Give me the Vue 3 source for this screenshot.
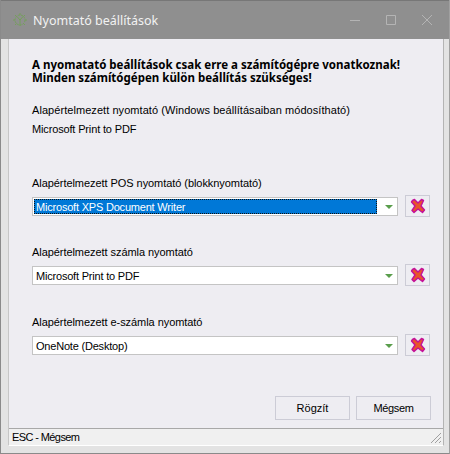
<script setup>
const printers = [
  { label: "Alapértelmezett POS nyomtató (blokknyomtató)", value: "Microsoft XPS Document Writer", selected: true },
  { label: "Alapértelmezett számla nyomtató", value: "Microsoft Print to PDF", selected: false },
  { label: "Alapértelmezett e-számla nyomtató", value: "OneNote (Desktop)", selected: false },
];
</script>

<template>
  <div class="window">
    <div class="titlebar">
      <svg class="app-icon" width="16" height="16" viewBox="0 0 16 16">
        <g fill="none" stroke="#74a05a" stroke-width="1">
          <circle cx="8" cy="8" r="5" stroke-dasharray="2 1" />
          <path d="M8 14V8M5 4.500L8 8l3-3.500M8 1v2M1 8h2M13 8h2M3 3l1.500 1.500M13 3l-1.500 1.500M3 13l1.500-1.500M13 13l-1.500-1.500" />
        </g>
      </svg>
      <span class="title">Nyomtató beállítások</span>
      <div class="controls">
        <svg width="10" height="10" viewBox="0 0 10 10"><path d="M0 5.500h10" stroke="#b4b4b4" /></svg>
        <svg width="10" height="10" viewBox="0 0 10 10"><path d="M.5.500h9v9h-9z" fill="none" stroke="#b4b4b4" /></svg>
        <svg width="10" height="10" viewBox="0 0 10 10"><path d="M0 0l10 10M10 0L0 10" stroke="#b4b4b4" /></svg>
      </div>
    </div>

    <div class="frame">
      <div class="content">
        <div class="form">
          <p class="warning">
            A nyomatató beállítások csak erre a számítógépre vonatkoznak!<br />
            Minden számítógépen külön beállítás szükséges!
          </p>
          <p class="default-label">Alapértelmezett nyomtató (Windows beállításaiban módosítható)</p>
          <p class="default-value">Microsoft Print to PDF</p>

          <div v-for="p in printers" :key="p.label" class="field">
            <label>{{ p.label }}</label>
            <div class="row">
              <div class="combo">
                <span class="combo-text" :class="{ selected: p.selected }">{{ p.value }}</span>
                <span class="arrow"></span>
              </div>
              <button class="clear">
                <svg width="16" height="16" viewBox="0 0 16 16">
                  <path d="M2.500 2.500l2-1L8 5l3.500-3.500 2 1L11 8l3.500 4-2 2.500L8 11l-4 3.500-2-2L5 8 1.500 4z" fill="#e8552a" stroke="#c4109a" stroke-width="1.400" stroke-linejoin="round" />
                </svg>
              </button>
            </div>
          </div>
        </div>

        <div class="actions">
          <button class="btn">Rögzít</button>
          <button class="btn cancel">Mégsem</button>
        </div>

        <div class="statusbar">
          <span>ESC - Mégsem</span>
          <svg class="grip" width="12" height="12" viewBox="0 0 12 12">
            <path d="M11 1L1 11M11 5L5 11M11 9l-2 2" stroke="#a0a0a0" fill="none" />
          </svg>
        </div>
      </div>
    </div>
  </div>
</template>

<style>
html,
body {
  margin: 0;
  background: #e3e3e3;
}
</style>

<style scoped>
.window {
  width: 450px;
  height: 454px;
  box-sizing: border-box;
  display: flex;
  flex-direction: column;
  border-left: 1px solid #8a8a8a;
  border-right: 1px solid #a0a0a0;
  border-bottom: 1px solid #8a8a8a;
  font-family: "Liberation Sans", Arial, sans-serif;
  font-size: 11px;
  color: #000;
}
.titlebar {
  height: 39px;
  flex: none;
  background: #8f8f8f;
  border-top: 1px solid #777;
  box-sizing: border-box;
  display: flex;
  align-items: center;
  padding-left: 11px;
}
.app-icon {
  margin-right: 5px;
}
.title {
  font-family: "Noto Sans", sans-serif;
  font-size: 12.500px;
  color: #f2f2f2;
}
.controls {
  margin-left: auto;
  display: flex;
  align-items: center;
  gap: 26px;
  padding-right: 17px;
}
.frame {
  flex: 1;
  display: flex;
  padding: 0 5px 7px 7px;
  min-height: 0;
}
.content {
  flex: 1;
  display: flex;
  flex-direction: column;
  background: #eeedf2;
  border-left: 1px solid #c6c6c6;
  border-right: 1px solid #b4b4b4;
  border-bottom: 1px solid #fff;
  min-width: 0;
}
.form {
  flex: 1;
  padding: 19px 12px 0 23px;
}
p {
  margin: 0;
}
.warning {
  font-family: "Noto Sans", sans-serif;
  font-size: 11.500px;
  font-weight: 700;
  line-height: 13px;
}
.default-label {
  margin-top: 20px;
  line-height: 13px;
  letter-spacing: 0.06px;
}
.default-value {
  margin-top: 6px;
  line-height: 13px;
  letter-spacing: -0.15px;
}
.field {
  margin-top: 41px;
}
.field + .field {
  margin-top: 29px;
}
.field:last-child {
  margin-top: 30px;
}
.field label {
  display: block;
  line-height: 13px;
  letter-spacing: -0.06px;
}
.row {
  display: flex;
  align-items: flex-start;
  gap: 7px;
  margin-top: 5px;
}
.combo {
  width: 366px;
  height: 19px;
  margin-top: 2px;
  box-sizing: border-box;
  border: 1px solid #c4c4c4;
  background: #fff;
  display: flex;
  align-items: center;
  padding: 1px;
}
.combo-text {
  flex: 1;
  height: 100%;
  line-height: 15px;
  box-sizing: border-box;
  padding-left: 1px;
  margin-right: 19px;
  border: 1px solid transparent;
  letter-spacing: -0.2px;
}
.combo-text.selected {
  background: #0078d7;
  border: 1px dotted #111;
  color: #fff;
}
.arrow {
  position: absolute;
  margin-left: 351px;
  width: 0;
  height: 0;
  border-left: 4px solid transparent;
  border-right: 4px solid transparent;
  border-top: 4px solid #5a9e4c;
}
.clear {
  width: 25px;
  height: 22px;
  padding: 0;
  box-sizing: border-box;
  background: #eeedf2;
  border: 1px solid #ccccd6;
  display: flex;
  align-items: center;
  justify-content: center;
}
.actions {
  display: flex;
  justify-content: flex-end;
  gap: 6px;
  padding: 0 12px 8px 0;
}
.btn {
  width: 75px;
  height: 24px;
  padding: 0;
  background: #eeedf2;
  border: 1px solid #ccccd6;
  font: inherit;
  color: #000;
}
.btn.cancel {
  letter-spacing: -0.4px;
}
.statusbar {
  height: 17px;
  flex: none;
  box-sizing: border-box;
  border-top: 1px solid #a8a8a8;
  background: #f0f0f0;
  display: flex;
  align-items: center;
  padding-left: 3px;
  line-height: 13px;
  position: relative;
  letter-spacing: -0.6px;
}
.grip {
  position: absolute;
  right: 1px;
  bottom: 1px;
}
</style>
